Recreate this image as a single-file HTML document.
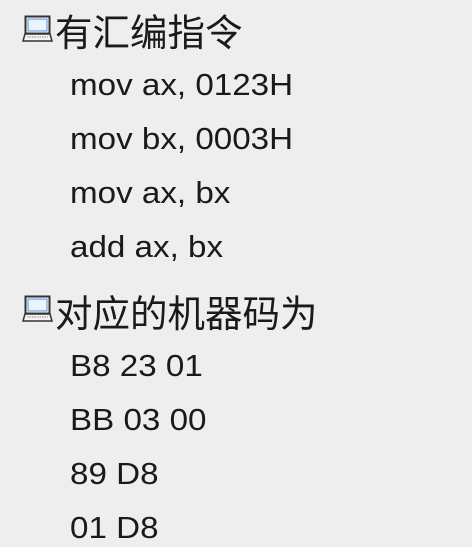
<!DOCTYPE html>
<html><head><meta charset="utf-8"><style>
body{margin:0;width:472px;height:547px;background:#eeeeee;overflow:hidden;position:relative;font-family:"Liberation Sans","Noto Sans CJK SC",sans-serif;color:#1a1a1a}
.h{position:absolute;left:55px;font-size:37.5px;line-height:40px;font-family:"Noto Sans CJK SC",sans-serif;white-space:nowrap}
.i{position:absolute;left:70px;font-size:31px;line-height:36px;white-space:nowrap;transform:scaleX(1.07);transform-origin:left}
svg{position:absolute}
</style></head><body>
<svg style="left:22px;top:15px" width="31" height="28" viewBox="0 0 31 28"><rect x="3.5" y="1.5" width="24" height="17" fill="#fff" stroke="#333" stroke-width="2"/><rect x="6" y="4" width="19" height="12" fill="#eaf4ff" stroke="#5a8ed0" stroke-width="1"/><path d="M3 19 L1 26 L30 26 L28 19 Z" fill="#f4f4f4" stroke="#333" stroke-width="1.5"/><path d="M5 22 H26" stroke="#888" stroke-dasharray="1.5 1"/></svg>
<div class="h" style="top:10px">有汇编指令</div>
<div class="i" style="top:67px">mov ax, 0123H</div>
<div class="i" style="top:121px">mov bx, 0003H</div>
<div class="i" style="top:175px">mov ax, bx</div>
<div class="i" style="top:229px">add ax, bx</div>
<svg style="left:22px;top:295px" width="31" height="28" viewBox="0 0 31 28"><rect x="3.5" y="1.5" width="24" height="17" fill="#fff" stroke="#333" stroke-width="2"/><rect x="6" y="4" width="19" height="12" fill="#eaf4ff" stroke="#5a8ed0" stroke-width="1"/><path d="M3 19 L1 26 L30 26 L28 19 Z" fill="#f4f4f4" stroke="#333" stroke-width="1.5"/><path d="M5 22 H26" stroke="#888" stroke-dasharray="1.5 1"/></svg>
<div class="h" style="top:291px">对应的机器码为</div>
<div class="i" style="top:348px">B8 23 01</div>
<div class="i" style="top:402px">BB 03 00</div>
<div class="i" style="top:456px">89 D8</div>
<div class="i" style="top:510px">01 D8</div>
</body></html>
